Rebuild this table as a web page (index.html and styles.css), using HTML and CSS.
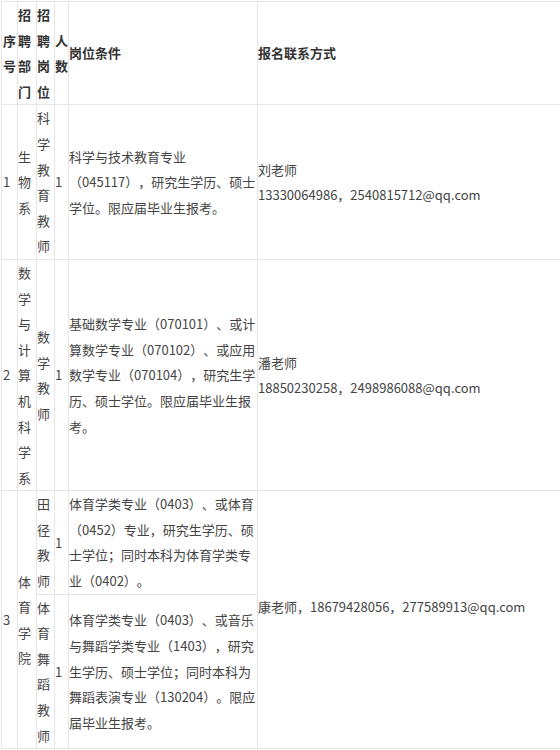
FILE: index.html
```html
<!DOCTYPE html>
<html>
<head>
    <meta charset="utf-8">
    <title>招聘岗位</title>
    <meta name="viewport" content="width=device-width, initial-scale=1">
    <link rel="stylesheet" href="styles.css">
</head>
<body>
    <table class="job-table">
        <colgroup>
            <col class="c-no">
            <col class="c-dept">
            <col class="c-post">
            <col class="c-num">
            <col class="c-cond">
            <col class="c-contact">
        </colgroup>
        <thead>
            <tr>
                <th class="no">序号</th>
                <th>招聘部门</th>
                <th>招聘岗位</th>
                <th>人数</th>
                <th>岗位条件</th>
                <th>报名联系方式</th>
            </tr>
        </thead>
        <tbody>
            <tr>
                <td class="no">1</td>
                <td>生物系</td>
                <td>科学教育教师</td>
                <td>1</td>
                <td>科学与技术教育专业（045117），研究生学历、硕士学位。限应届毕业生报考。</td>
                <td>
                    <p>刘老师</p>
                    <p>13330064986，2540815712@qq.com</p>
                </td>
            </tr>
            <tr>
                <td class="no">2</td>
                <td>数学与计算机科学系</td>
                <td>数学教师</td>
                <td>1</td>
                <td>基础数学专业（070101）、或计算数学专业（070102）、或应用数学专业（070104），研究生学历、硕士学位。限应届毕业生报考。</td>
                <td>
                    <p>潘老师</p>
                    <p>18850230258，2498986088@qq.com</p>
                </td>
            </tr>
            <tr>
                <td class="no" rowspan="2">3</td>
                <td rowspan="2">体育学院</td>
                <td>田径教师</td>
                <td>1</td>
                <td>体育学类专业（0403）、或体育（0452）专业，研究生学历、硕士学位；同时本科为体育学类专业（0402）。</td>
                <td rowspan="2">
                    <p>康老师，18679428056，277589913@qq.com</p>
                    <p><br></p>
                </td>
            </tr>
            <tr>
                <td>体育舞蹈教师</td>
                <td>1</td>
                <td>体育学类专业（0403）、或音乐与舞蹈学类专业（1403），研究生学历、硕士学位；同时本科为舞蹈表演专业（130204）。限应届毕业生报考。</td>
            </tr>
        </tbody>
    </table>
</body>
</html>
```

FILE: styles.css
```css
html, body {
    overflow: hidden;
}

body {
    margin: 0;
    background-color: #ffffff;
    font-family: "Microsoft YaHei", "Noto Sans CJK SC", "Noto Sans", sans-serif;
    font-size: 13px;
    line-height: 25.6px;
    color: #444444;
    text-spacing-trim: space-all;
}

.job-table {
    table-layout: fixed;
    border-collapse: collapse;
    width: 570px;
    margin: 1px 0 0 1px;
}

.c-no { width: 16px; }
.c-dept { width: 19px; }
.c-post { width: 18px; }
.c-num { width: 14px; }
.c-cond { width: 189px; }

.job-table th,
.job-table td {
    border: 1px solid #e6e6e6;
    padding: 0;
    text-align: left;
    vertical-align: middle;
}

.job-table th {
    font-weight: bold;
    color: #333333;
}

.job-table .no {
    padding-left: 1px;
}

.job-table p {
    margin: 0;
}
```
